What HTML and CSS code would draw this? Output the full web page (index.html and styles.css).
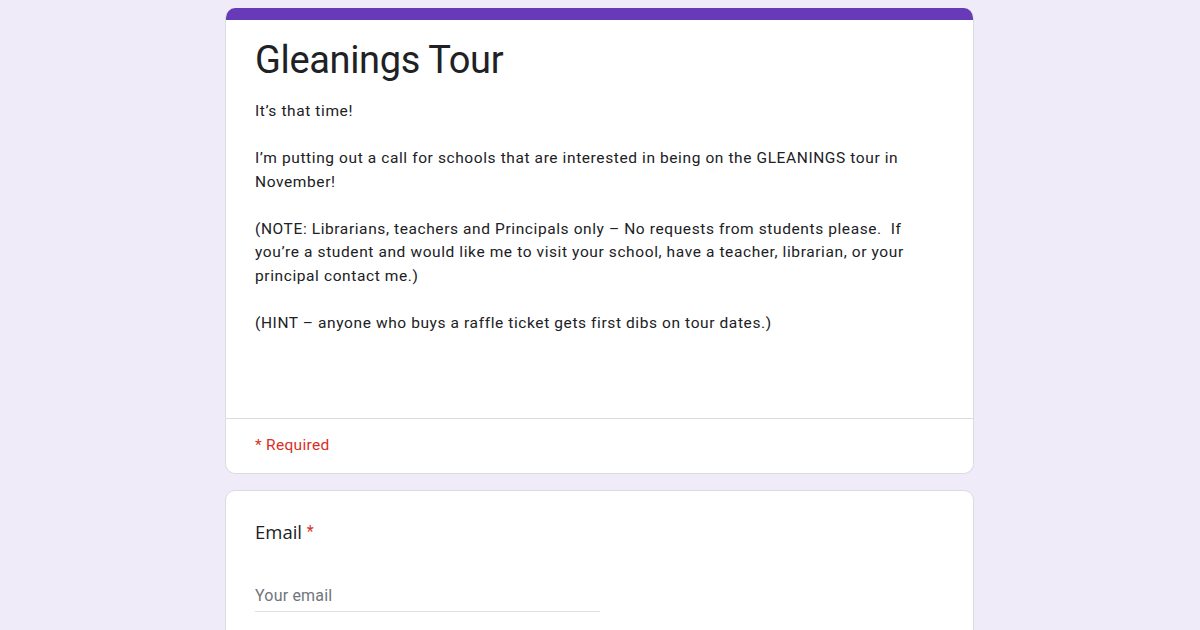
FILE: index.html
```html
<!DOCTYPE html>
<html>
<head>
<meta charset="utf-8">
<title>Gleanings Tour</title>
<link rel="stylesheet" href="styles.css">
</head>
<body>
<div class="page">
  <div class="card header-card">
    <div class="accent"></div>
    <div class="header-main">
      <h1 class="title">Gleanings Tour</h1>
      <div class="desc">
        <p>It’s that time!</p>
        <p>I’m putting out a call for schools that are interested in being on the GLEANINGS tour in<br>November!</p>
        <p>(NOTE: Librarians, teachers and Principals only – No requests from students please.&nbsp; If<br>you’re a student and would like me to visit your school, have a teacher, librarian, or your<br>principal contact me.)</p>
        <p>(HINT – anyone who buys a raffle ticket gets first dibs on tour dates.)</p>
      </div>
    </div>
    <div class="required-row">* Required</div>
  </div>
  <div class="card question-card">
    <div class="q-label">Email <span class="star">*</span></div>
    <div class="input-line">Your email</div>
  </div>
</div>
</body>
</html>
```
FILE: styles.css
```css
html, body {
  margin: 0;
  padding: 0;
}
body {
  background: #f0ebf8;
  font-family: Roboto, "Liberation Sans", Arial, sans-serif;
  color: #202124;
  height: 630px;
  overflow: hidden;
}
.page {
  width: 749px;
  margin: 0 auto;
  padding-top: 8px;
  display: flex;
  flex-direction: column;
  gap: 16px;
  position: relative;
  left: -0.5px;
}
.card {
  background: #fff;
  border: 1px solid #dadce0;
  border-radius: 10px;
  box-sizing: border-box;
}
.header-card {
  overflow: hidden;
  border-top: none;
}
.accent {
  height: 12px;
  background: #673ab7;
  margin: 0 -1px;
}
.header-main {
  padding: 16px 29px 0 29px;
  height: 399px;
  box-sizing: border-box;
  border-bottom: 1px solid #dadce0;
}
.title {
  margin: 0;
  font-family: Roboto, "Open Sans", sans-serif;
  font-weight: 400;
  font-size: 38px;
  line-height: 48px;
  letter-spacing: -0.35px;
  color: #202124;
}
.desc {
  margin-top: 16px;
  font-size: 15.5px;
  line-height: 23.5px;
  letter-spacing: 0.6px;
  white-space: nowrap;
}
.desc p {
  margin: 0 0 23.5px 0;
}
.required-row {
  height: 54px;
  padding: 0 29px;
  display: flex;
  align-items: center;
  color: #d93025;
  font-size: 15.5px;
  letter-spacing: 0.3px;
  box-sizing: border-box;
  padding-bottom: 3px;
}
.question-card {
  padding: 29px 29px 0 29px;
  height: 160px;
}
.q-label {
  font-family: "Open Sans", Roboto, sans-serif;
  font-size: 18.5px;
  line-height: 24px;
  color: #202124;
}
.star {
  color: #d93025;
  font-family: Roboto, sans-serif;
  font-size: 16px;
  vertical-align: 2px;
}
.input-line {
  margin-top: 40px;
  width: 345px;
  font-size: 16px;
  line-height: 24px;
  letter-spacing: 0.2px;
  color: #70757a;
  border-bottom: 1px solid #e0e0e0;
  padding-bottom: 3px;
}
```
